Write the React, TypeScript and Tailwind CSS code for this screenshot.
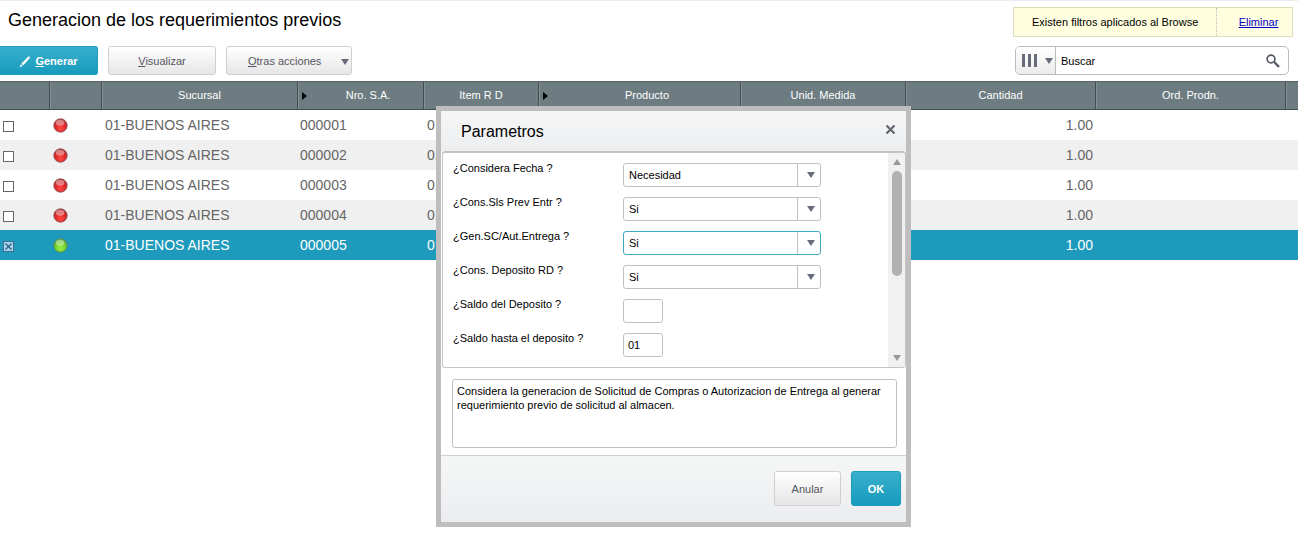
import { useState } from "react";

type Column = { title: string; width: string; sorted?: boolean };

const columns: Column[] = [
  { title: "", width: "w-[50px]" },
  { title: "", width: "w-[52px]" },
  { title: "Sucursal", width: "w-[196px]" },
  { title: "Nro. S.A.", width: "w-[126px]", sorted: true },
  { title: "Item R D", width: "w-[115px]" },
  { title: "Producto", width: "w-[202px]", sorted: true },
  { title: "Unid. Medida", width: "w-[165px]" },
  { title: "Cantidad", width: "w-[190px]" },
  { title: "Ord. Prodn.", width: "w-[190px]" },
  { title: "", width: "w-auto" },
];

const rows = [
  { id: "000001", branch: "01-BUENOS AIRES", item: "01", qty: "1.00", ready: false },
  { id: "000002", branch: "01-BUENOS AIRES", item: "01", qty: "1.00", ready: false },
  { id: "000003", branch: "01-BUENOS AIRES", item: "01", qty: "1.00", ready: false },
  { id: "000004", branch: "01-BUENOS AIRES", item: "01", qty: "1.00", ready: false },
  { id: "000005", branch: "01-BUENOS AIRES", item: "01", qty: "1.00", ready: true },
];

const selects = [
  { id: "fecha", label: "¿Considera Fecha ?", value: "Necesidad", other: "Emision" },
  { id: "sls", label: "¿Cons.Sls Prev Entr ?", value: "Si", other: "No" },
  { id: "gensc", label: "¿Gen.SC/Aut.Entrega ?", value: "Si", other: "No", active: true },
  { id: "deprd", label: "¿Cons. Deposito RD ?", value: "Si", other: "No" },
];

const inputs = [
  { id: "desde", label: "¿Saldo del Deposito ?", value: "" },
  { id: "hasta", label: "¿Saldo hasta el deposito ?", value: "01" },
];

const greyBtn =
  "border border-[#cfcfcf] bg-linear-to-b from-white to-[#e6e6e6] text-[#55555f] rounded-[3px]";
const blueBtn =
  "border border-[#1e9abb] bg-linear-to-b from-[#38afcd] to-[#149bbd] font-bold text-white rounded-[3px]";

function Caret({ className = "" }: { className?: string }) {
  return (
    <svg viewBox="0 0 8 6" className={`h-1.5 w-2 shrink-0 ${className}`} aria-hidden="true">
      <path d="M0 0h8L4 6z" fill="currentColor" />
    </svg>
  );
}

function Light({ green }: { green: boolean }) {
  const id = green ? "light-green" : "light-red";
  return (
    <svg viewBox="0 0 15 15" className="mt-px block h-[15px] w-[15px]" role="img" aria-label={green ? "Verde" : "Rojo"}>
      <defs>
        <radialGradient id={id} cx="50%" cy="72%" r="62%">
          <stop offset="0" stopColor={green ? "#9bf04a" : "#ff4a44"} />
          <stop offset="0.6" stopColor={green ? "#76d32f" : "#e0282b"} />
          <stop offset="1" stopColor={green ? "#5fae38" : "#b8282c"} />
        </radialGradient>
      </defs>
      <circle cx="7.5" cy="7.5" r="6.7" fill={`url(#${id})`} stroke={green ? "#5c8a50" : "#8c5558"} strokeWidth="0.9" />
      <ellipse cx="7.1" cy="4.8" rx="4.3" ry="3" fill="#fff" opacity="0.4" />
    </svg>
  );
}

function RowCheck({ label, initial }: { label: string; initial: boolean }) {
  const [checked, setChecked] = useState(initial);
  return (
    <span className="relative ml-[3px] mt-[3px] block h-[11px] w-[11px]">
      <input
        type="checkbox"
        aria-label={label}
        checked={checked}
        onChange={() => setChecked(!checked)}
        className="block h-[11px] w-[11px] appearance-none border border-[#666] bg-white checked:border-[#3f6f8c] checked:bg-[#a9d6ee]"
      />
      {checked && (
        <svg viewBox="0 0 11 11" className="pointer-events-none absolute inset-0" aria-hidden="true">
          <path d="M2.5 2.5l6 6M8.5 2.5l-6 6" stroke="#2d5f86" strokeWidth="1.3" />
        </svg>
      )}
    </span>
  );
}

function Grid() {
  return (
    <table className="w-full table-fixed border-separate border-spacing-0">
      <thead>
        <tr className="h-[29px] bg-[#6d7c81] text-[11px] text-white">
          {columns.map((col, i) => (
            <th
              key={i}
              className={`${col.width} border-y border-r border-[#444e52] border-t-[#566266] p-0 font-normal shadow-[inset_1px_0_0_#849196] first:shadow-none last:border-r-0`}
            >
              <div className="flex items-center">
                {col.sorted && (
                  <svg viewBox="0 0 5 8" className="ml-1 mr-1.5 h-2 w-[5px]" aria-hidden="true">
                    <path d="M0 0l5 4-5 4z" fill="#000" />
                  </svg>
                )}
                <span className="flex-1">{col.title}</span>
              </div>
            </th>
          ))}
        </tr>
      </thead>
      <tbody>
        {rows.map((row) => (
          <tr
            key={row.id}
            className={`h-[30px] text-sm ${row.ready ? "bg-[#1e9bbc] text-white" : "text-[#666] even:bg-[#f0f0f0]"}`}
          >
            <td className="p-0">
              <RowCheck label={`Seleccionar ${row.id}`} initial={row.ready} />
            </td>
            <td className="p-0 pl-[3px]">
              <Light green={row.ready} />
            </td>
            <td className="p-0 pl-[3px]">{row.branch}</td>
            <td className="p-0 pl-0.5">{row.id}</td>
            <td className="p-0 pl-[3px]">{row.item}</td>
            <td className="p-0" />
            <td className="p-0" />
            <td className="p-0 pr-[3px] text-right">{row.qty}</td>
            <td className="p-0" />
            <td className="p-0" />
          </tr>
        ))}
      </tbody>
    </table>
  );
}

function ParamsDialog() {
  return (
    <section
      role="dialog"
      aria-labelledby="dlg-title"
      className="w-[475px] border-5 border-[#bebebe] bg-white text-[11px] text-black"
    >
      <header className="flex h-10 items-center justify-between bg-linear-to-b from-[#f6f6f6] to-[#eceef0] pl-5 pr-2.5">
        <h2 id="dlg-title" className="pt-0.5 text-base">Parametros</h2>
        <button type="button" aria-label="Cerrar" className="text-[#636670]">
          <svg viewBox="0 0 11 11" className="mb-1 block h-[11px] w-[11px]" aria-hidden="true">
            <path d="M1.5 1.5l8 8M9.5 1.5l-8 8" stroke="currentColor" strokeWidth="2.2" />
          </svg>
        </button>
      </header>

      <div className="ml-px flex rounded-[3px] border border-[#c4c4c4] border-t-2">
        <div className="flex flex-1 flex-col gap-2.5 py-2.5 pl-2.5">
          {selects.map((f) => (
            <div key={f.id} className="flex">
              <label htmlFor={f.id} className="w-[170px] leading-[10px]">{f.label}</label>
              <div className="relative h-6 w-[198px]">
                <select
                  id={f.id}
                  defaultValue={f.value}
                  className={`h-6 w-full appearance-none rounded-[3px] border bg-white pl-[5px] ${f.active ? "border-[#3fa9c0]" : "border-[#bfc1c4]"}`}
                >
                  <option>{f.value}</option>
                  <option>{f.other}</option>
                </select>
                <span className="pointer-events-none absolute inset-y-px right-px flex w-[23px] items-center justify-center border-l border-[#bfc1c4] pl-1 text-[#686c7a]">
                  <Caret />
                </span>
              </div>
            </div>
          ))}
          {inputs.map((f) => (
            <div key={f.id} className="flex">
              <label htmlFor={f.id} className="w-[170px] leading-[10px]">{f.label}</label>
              <input
                id={f.id}
                defaultValue={f.value}
                className="h-6 w-10 rounded-[3px] border border-[#bfc1c4] px-1"
              />
            </div>
          ))}
        </div>
        <div className="flex w-[17px] flex-col items-center bg-[#f1f1f1] py-1.5 text-[#999]" aria-hidden="true">
          <Caret className="rotate-180" />
          <div className="mt-1.5 h-[105px] w-2.5 rounded-full bg-[#b1b1b1]" />
          <Caret className="mt-auto" />
        </div>
      </div>

      <textarea
        aria-label="Ayuda"
        readOnly
        value="Considera la generacion de Solicitud de Compras o Autorizacion de Entrega al generar requerimiento previo de solicitud al almacen."
        className="mx-[11px] mb-[7px] mt-[11px] block h-[69px] w-[445px] resize-none rounded-[3px] border border-[#bfc1c4] px-1 py-1 leading-[14px]"
      />

      <footer className="flex justify-end gap-2.5 border-t border-[#d2d2d2] bg-linear-to-b from-[#f5f6f6] to-[#ebedf0] pb-4 pr-[5px] pt-[15px]">
        <button type="button" className={`${greyBtn} h-[35px] w-[67px] pt-0.5`}>Anular</button>
        <button type="button" className={`${blueBtn} h-[35px] w-[50px] pt-0.5`}>OK</button>
      </footer>
    </section>
  );
}

export default function App() {
  return (
    <main className="relative min-h-screen border-t border-[#ececec] bg-white font-['Liberation_Sans',Arial,sans-serif]">
      <div className="flex h-[45px] items-start justify-between pl-2 pr-[5px]">
        <h1 className="mt-2 text-lg leading-[22px] text-black">Generacion de los requerimientos previos</h1>
        <div className="mt-1.5 flex h-[30px] items-center border border-[#dedfba] bg-[#ffffdf] text-[11px] text-black">
          <span className="w-[202px] pl-[18px]">Existen filtros aplicados al Browse</span>
          <span className="flex h-full w-[76px] items-center justify-center border-l border-dotted border-[#bbb] pl-2">
            <a href="#" className="text-[#0000cc] underline">Eliminar</a>
          </span>
        </div>
      </div>

      <div className="flex justify-between pb-1.5 pr-[9px] text-[11px]">
        <div className="flex gap-2.5">
          <button type="button" className={`${blueBtn} flex h-[29px] w-[98px] items-center justify-center gap-1 rounded-l-none border-l-0 pt-0.5`}>
            <svg viewBox="0 0 12 12" className="h-3 w-3" aria-hidden="true">
              <path d="M0.5 11.5l1.3-3.2 1.7 1.7zM2.3 7.7L9.3.6c.8-.7 2.2.5 1.5 1.5L4.1 9.4z" fill="currentColor" />
            </svg>
            <span><u>G</u>enerar</span>
          </button>
          <button type="button" className={`${greyBtn} h-[29px] w-[108px] pt-0.5`}>
            <u>V</u>isualizar
          </button>
          <button type="button" className={`${greyBtn} flex h-[29px] w-[126px] items-center justify-between pl-[21px] pr-0.5 pt-0.5`}>
            <span><u>O</u>tras acciones</span>
            <Caret className="text-[#686c7a]" />
          </button>
        </div>
        <div className="flex h-[29px] w-[274px] items-center overflow-hidden rounded-[5px] border border-[#b9bbbe]">
          <button
            type="button"
            aria-label="Columnas"
            className="flex h-full w-10 items-center justify-between border-r border-[#b9bbbe] bg-linear-to-b from-white to-[#ececec] pl-1.5 pr-0.5 text-[#686c7a]"
          >
            <svg viewBox="0 0 15 13" className="h-[13px] w-[15px]" aria-hidden="true">
              <path d="M0 0h3v13H0zM6 0h3v13H6zM12 0h3v13h-3z" fill="currentColor" />
            </svg>
            <Caret />
          </button>
          <input
            aria-label="Buscar"
            placeholder="Buscar"
            className="h-full min-w-0 flex-1 px-[5px] pt-px outline-none placeholder:text-black"
          />
          <button type="button" aria-label="Ejecutar busqueda" className="mr-2 text-[#555a66]">
            <svg viewBox="0 0 14 14" className="h-3.5 w-3.5" fill="none" stroke="currentColor" aria-hidden="true">
              <circle cx="5" cy="5" r="3.9" strokeWidth="1.7" />
              <path d="M8.2 8l4.8 5" strokeWidth="2.4" />
            </svg>
          </button>
        </div>
      </div>

      <Grid />

      {/* Dialog over the grid */}
      <div className="absolute inset-x-0 top-[105px] flex justify-center pl-[49px]">
        <ParamsDialog />
      </div>
    </main>
  );
}
